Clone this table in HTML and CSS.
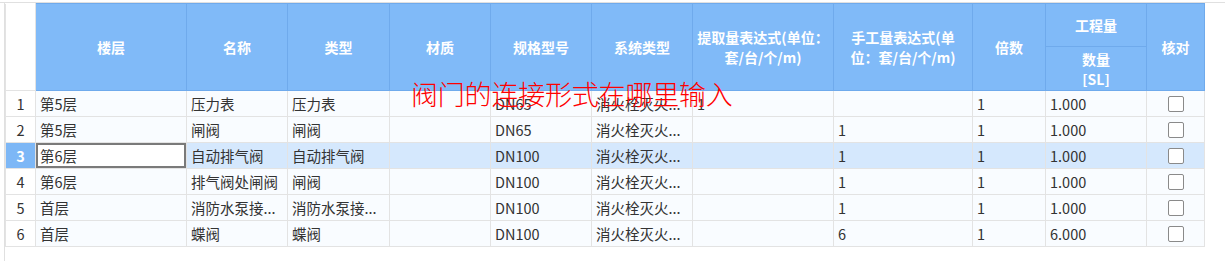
FILE: index.html
```html
<!DOCTYPE html>
<html lang="zh">
<head>
<meta charset="utf-8">
<link rel="stylesheet" href="styles.css">
</head>
<body>
<div class="frame">
  <div class="pane">
    <table class="grid">
      <colgroup>
        <col class="c-no"><col class="c-floor"><col class="c-name"><col class="c-type"><col class="c-mat"><col class="c-spec"><col class="c-sys"><col class="c-expr1"><col class="c-expr2"><col class="c-mul"><col class="c-qty"><col class="c-chk">
      </colgroup>
      <thead>
        <tr class="h1">
          <th class="corner" rowspan="2"></th>
          <th rowspan="2">楼层</th>
          <th rowspan="2">名称</th>
          <th rowspan="2">类型</th>
          <th rowspan="2">材质</th>
          <th rowspan="2">规格型号</th>
          <th rowspan="2">系统类型</th>
          <th rowspan="2" class="wrap">提取量表达式(单位：<br>套/台/个/m)</th>
          <th rowspan="2" class="wrap">手工量表达式(单<br>位：套/台/个/m)</th>
          <th rowspan="2">倍数</th>
          <th class="group">工程量</th>
          <th rowspan="2">核对</th>
        </tr>
        <tr class="h2">
          <th class="wrap">数量<br>[SL]</th>
        </tr>
      </thead>
      <tbody>
        <tr>
          <td class="no">1</td><td>第5层</td><td>压力表</td><td>压力表</td><td></td><td>DN65</td><td>消火栓灭火...</td><td>1</td><td></td><td>1</td><td>1.000</td><td class="chk"><span class="box"></span></td>
        </tr>
        <tr>
          <td class="no">2</td><td>第5层</td><td>闸阀</td><td>闸阀</td><td></td><td>DN65</td><td>消火栓灭火...</td><td></td><td>1</td><td>1</td><td>1.000</td><td class="chk"><span class="box"></span></td>
        </tr>
        <tr class="sel">
          <td class="no">3</td><td class="focus">第6层</td><td>自动排气阀</td><td>自动排气阀</td><td></td><td>DN100</td><td>消火栓灭火...</td><td></td><td>1</td><td>1</td><td>1.000</td><td class="chk"><span class="box"></span></td>
        </tr>
        <tr>
          <td class="no">4</td><td>第6层</td><td>排气阀处闸阀</td><td>闸阀</td><td></td><td>DN100</td><td>消火栓灭火...</td><td></td><td>1</td><td>1</td><td>1.000</td><td class="chk"><span class="box"></span></td>
        </tr>
        <tr>
          <td class="no">5</td><td>首层</td><td>消防水泵接...</td><td>消防水泵接...</td><td></td><td>DN100</td><td>消火栓灭火...</td><td></td><td>1</td><td>1</td><td>1.000</td><td class="chk"><span class="box"></span></td>
        </tr>
        <tr>
          <td class="no">6</td><td>首层</td><td>蝶阀</td><td>蝶阀</td><td></td><td>DN100</td><td>消火栓灭火...</td><td></td><td>6</td><td>1</td><td>6.000</td><td class="chk"><span class="box"></span></td>
        </tr>
      </tbody>
    </table>
    <div class="note">阀门的连接形式在哪里输入</div>
  </div>
</div>
</body>
</html>
```

FILE: styles.css
```css
html, body {
  margin: 0;
  padding: 0;
  background: #ffffff;
}

body {
  font-family: "Noto Sans CJK SC", "Noto Sans", sans-serif;
  font-size: 14.5px;
  color: #333333;
}

.frame {
  margin-top: 2px;
  border-top: 1px solid #e0e0e0;
  height: 258px;
}

.pane {
  position: relative;
  margin-left: 4px;
  border-left: 1px solid #e0e0e0;
  height: 100%;
}

.grid {
  border-collapse: collapse;
  table-layout: fixed;
  width: 1199px;
}

.c-no { width: 30px; }
.c-floor { width: 151px; }
.c-name { width: 101px; }
.c-type { width: 102px; }
.c-mat { width: 101px; }
.c-spec { width: 101px; }
.c-sys { width: 101px; }
.c-expr1 { width: 141px; }
.c-expr2 { width: 139px; }
.c-mul { width: 73px; }
.c-qty { width: 101px; }
.c-chk { width: 58px; }

.grid th {
  background: #80baf8;
  color: #ffffff;
  font-weight: bold;
  font-size: 14px;
  line-height: 20px;
  text-align: center;
  vertical-align: middle;
  border: 1px solid #6faaec;
  padding: 0;
  white-space: nowrap;
  overflow: hidden;
}

.grid th.corner {
  background: #ffffff;
  border: 1px solid #e3e3e3;
  border-top: none;
}

.h1 { height: 42px; }
.h2 { height: 44px; }

.grid th.group {
  height: 42px;
}

.grid td {
  height: 25px;
  padding: 0 0 0 4px;
  border: 1px solid #e3e3e3;
  background: #f9fcff;
  white-space: nowrap;
  overflow: hidden;
  line-height: 24px;
  vertical-align: middle;
}

.grid td.no {
  background: #ffffff;
  text-align: center;
  padding: 0;
}

.grid tr.sel td {
  background: #d5e8fd;
}

.grid tr.sel td.no {
  background: #7db7f6;
  color: #ffffff;
  font-weight: bold;
}

.grid tr.sel td.focus {
  background: #ffffff;
  box-shadow: inset 0 0 0 2px #7a7a7a;
}

.grid td.chk {
  text-align: center;
  padding: 0;
}

.box {
  display: inline-block;
  width: 14px;
  height: 14px;
  border: 1px solid #8a8a8a;
  border-radius: 2px;
  background: #ffffff;
  vertical-align: middle;
  margin-top: -3px;
}

.note {
  position: absolute;
  left: 406px;
  top: 74px;
  color: #ff0000;
  font-size: 27px;
  font-weight: 300;
  line-height: 34px;
  white-space: nowrap;
  letter-spacing: -0.2px;
}
```
